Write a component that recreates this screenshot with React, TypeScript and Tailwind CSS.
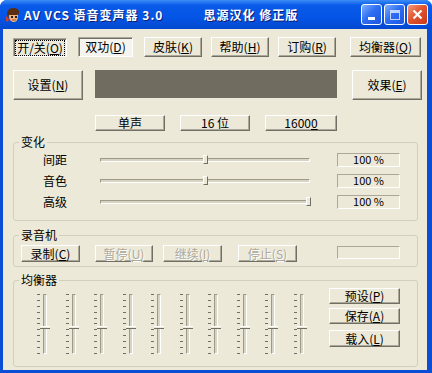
const font = "font-['Noto_Sans_CJK_SC',sans-serif]";

const face =
  'flex items-center justify-center border border-t-white border-l-white border-r-[#716f64] border-b-[#716f64] bg-[#ece9d8] shadow-[inset_-1px_-1px_0_#aca899] text-[12px] leading-none';
const raised = `${face} text-black`;
const disabled = `${face} text-[#aca899] [text-shadow:1px_1px_0_#fff]`;
const sunken =
  'flex items-center justify-center border border-t-[#aca899] border-l-[#aca899] border-r-white border-b-white shadow-[inset_1px_1px_0_#716f64] text-[12px] leading-none text-black';

const TitleIcon = () => (
  <svg width="16" height="16" viewBox="0 0 16 16">
    <path d="M2 7 C2 2 6 1 9 1 C13 1 15 4 14 8 L13 6 L12 9 L4 9 L3 11 Z" fill="#5a2e12" />
    <path d="M4 8 C4 13 6 15 9 15 C12 15 13 12 13 8 Z" fill="#f2b27a" />
    <rect x="6" y="9" width="2" height="2" fill="#222" />
    <rect x="10" y="9" width="2" height="2" fill="#222" />
    <path d="M7 13 L11 13" stroke="#b3502a" strokeWidth="1" />
    <path d="M1 9 L4 12 L3 15 L1 14 Z" fill="#d43a2a" />
  </svg>
);

const CapButton = ({ kind }: { kind: 'min' | 'max' | 'close' }) => {
  const bg =
    kind === 'close'
      ? 'bg-[linear-gradient(135deg,#f39a7e,#e2562f_45%,#c8381a)]'
      : 'bg-[linear-gradient(135deg,#7fb1ff,#2f6ff3_45%,#1b55e0)]';
  return (
    <div className={`flex h-[21px] w-[21px] items-center justify-center rounded-[3px] border border-white ${bg}`}>
      {kind === 'min' && <div className="mt-[8px] h-[3px] w-[7px] bg-white" />}
      {kind === 'max' && (
        <div className="h-[10px] w-[10px] border border-t-[3px] border-white opacity-70" />
      )}
      {kind === 'close' && (
        <svg width="11" height="11" viewBox="0 0 11 11">
          <path d="M1.5 1.5 L9.5 9.5 M9.5 1.5 L1.5 9.5" stroke="white" strokeWidth="2.2" />
        </svg>
      )}
    </div>
  );
};

const HSlider = ({ pos }: { pos: number }) => (
  <div className="relative flex h-[21px] w-[210px] items-center">
    <div className="h-[4px] w-full border border-t-[#9d9a8a] border-l-[#9d9a8a] border-r-white border-b-white bg-[#d8d4c4]" />
    <div
      className="absolute top-[6px] h-[9px] w-[5px] border border-t-white border-l-white border-r-[#716f64] border-b-[#716f64] bg-[#ece9d8]"
      style={{ left: pos }}
    />
  </div>
);

const VSlider = () => (
  <div className="flex h-[60px] w-[28.5px] shrink-0">
    <div className="flex h-full w-[3px] flex-col justify-between">
      {Array.from({ length: 11 }).map((_, i) => (
        <div key={i} className="h-[1px] w-[3px] bg-[#716f64]" />
      ))}
    </div>
    <div className="relative ml-[3px] h-full w-[4px] border border-t-[#9d9a8a] border-l-[#9d9a8a] border-r-white border-b-white bg-[#d8d4c4]">
      <div className="absolute top-[31px] left-[-4px] h-[3px] w-[10px] border-t border-t-white border-b border-b-[#716f64] bg-[#ece9d8]" />
    </div>
  </div>
);

const Legend = ({ children }: { children: string }) => (
  <legend className="ml-[5px] px-[2px] text-[12px] leading-[14px] text-black">{children}</legend>
);

const Row = ({ label, pos }: { label: string; pos: number }) => (
  <div className="flex h-[21px] items-center">
    <div className="ml-[29px] w-[57px] text-[12px] leading-none">{label}</div>
    <HSlider pos={pos} />
    <div className="ml-[27px] flex h-[14px] w-[63px] items-center justify-center border border-t-[#aca899] border-l-[#aca899] border-r-white border-b-white text-[11px] leading-none">
      100 %
    </div>
  </div>
);

export default function App() {
  return (
    <div className={`flex h-[373px] w-[432px] flex-col rounded-t-[7px] bg-[#0a4ed6] ${font}`}>
      {/* title bar */}
      <div className="flex h-[29px] shrink-0 items-center rounded-t-[7px] bg-[linear-gradient(to_bottom,#3b8df7,#0a5ae8_18%,#0455e6_60%,#0348cf)] pl-[5px] pr-[4px]">
        <TitleIcon />
        <span className="ml-[3px] text-[12px] font-bold tracking-[1px] text-white [text-shadow:1px_1px_0_#0a1a70]">
          AV VCS 语音变声器 3.0
        </span>
        <span className="ml-[40px] text-[12px] font-bold tracking-[1px] text-white [text-shadow:1px_1px_0_#0a1a70]">
          思源汉化 修正版
        </span>
        <div className="ml-auto flex gap-[2px]">
          <CapButton kind="min" />
          <CapButton kind="max" />
          <CapButton kind="close" />
        </div>
      </div>

      {/* client */}
      <div className="mb-[3px] ml-[3px] mr-[5px] flex flex-1 flex-col bg-[#ece9d8] text-black">
        {/* row 1 */}
        <div className="mt-[8px] flex items-start">
          <div className={`ml-[10px] mt-[1px] h-[19px] w-[54px] ${sunken}`}>
            <span className="border border-dotted border-black px-[1px] py-[1px]">
              开/关(<u>O</u>)
            </span>
          </div>
          <div className={`ml-[11px] h-[20px] w-[55px] ${sunken} bg-[#f5f4ef]`}>
            双功(<u>D</u>)
          </div>
          <div className={`ml-[11px] h-[20px] w-[58px] ${raised}`}>
            皮肤(<u>K</u>)
          </div>
          <div className={`ml-[9px] h-[20px] w-[58px] ${raised}`}>
            帮助(<u>H</u>)
          </div>
          <div className={`ml-[9px] h-[20px] w-[58px] ${raised}`}>
            订购(<u>R</u>)
          </div>
          <div className={`ml-[14px] h-[20px] w-[71px] ${raised}`}>
            均衡器(<u>Q</u>)
          </div>
        </div>

        {/* row 2 */}
        <div className="mt-[13px] flex items-start">
          <div className={`ml-[10px] h-[30px] w-[70px] ${raised}`}>
            设置(<u>N</u>)
          </div>
          <div className="ml-[12px] h-[28px] w-[242px] bg-[#706c60]" />
          <div className={`ml-[15px] h-[30px] w-[70px] ${raised}`}>
            效果(<u>E</u>)
          </div>
        </div>

        {/* row 3 */}
        <div className="mt-[15px] flex">
          <div className={`ml-[92px] h-[16px] w-[70px] ${raised}`}>单声</div>
          <div className={`ml-[15px] h-[16px] w-[70px] ${raised}`}>16 位</div>
          <div className={`ml-[15px] h-[16px] w-[72px] ${raised}`}>
            1600<u>0</u>
          </div>
        </div>

        {/* 变化 */}
        <fieldset className="ml-[10px] mt-[4px] h-[86px] w-[405px] rounded-[3px] border border-[#d0d0bf]">
          <Legend>变化</Legend>
          <Row label="间距" pos={103} />
          <Row label="音色" pos={103} />
          <Row label="高级" pos={206} />
        </fieldset>

        {/* 录音机 */}
        <fieldset className="ml-[10px] mt-[7px] h-[39px] w-[405px] rounded-[3px] border border-[#d0d0bf]">
          <Legend>录音机</Legend>
          <div className="mt-[3px] flex items-start">
            <div className={`ml-[7px] h-[17px] w-[59px] ${raised}`}>
              录制(<u>C</u>)
            </div>
            <div className={`ml-[15px] h-[17px] w-[58px] ${disabled}`}>
              暂停(<u>U</u>)
            </div>
            <div className={`ml-[10px] h-[17px] w-[59px] ${disabled}`}>
              继续(<u>I</u>)
            </div>
            <div className={`ml-[16px] h-[17px] w-[59px] ${disabled}`}>
              停止(<u>S</u>)
            </div>
            <div className="ml-[40px] mt-[1px] h-[13px] w-[63px] border border-t-[#aca899] border-l-[#aca899] border-r-white border-b-white" />
          </div>
        </fieldset>

        {/* 均衡器 */}
        <fieldset className="ml-[10px] mt-[6px] h-[94px] w-[405px] rounded-[3px] border border-[#d0d0bf]">
          <Legend>均衡器</Legend>
          <div className="flex items-start">
            <div className="ml-[23px] mt-[7px] flex">
              {Array.from({ length: 10 }).map((_, i) => (
                <VSlider key={i} />
              ))}
            </div>
            <div className="ml-[7px] mt-[1px] flex flex-col">
              <div className={`h-[16px] w-[71px] ${raised}`}>
                预设(<u>P</u>)
              </div>
              <div className={`mt-[4px] h-[16px] w-[71px] ${raised}`}>
                保存(<u>A</u>)
              </div>
              <div className={`mt-[6px] h-[17px] w-[71px] ${raised}`}>
                载入(<u>L</u>)
              </div>
            </div>
          </div>
        </fieldset>
      </div>
    </div>
  );
}
